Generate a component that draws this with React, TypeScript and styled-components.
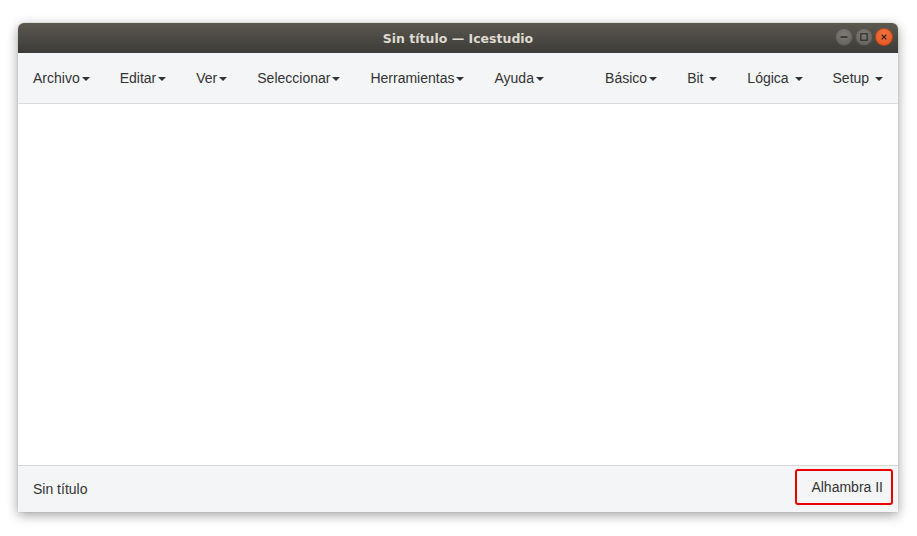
import React from "react";
import styled, { createGlobalStyle } from "styled-components";

const GlobalStyle = createGlobalStyle`
  html, body {
    margin: 0;
    padding: 0;
    background: #ffffff;
  }
`;

const Page = styled.div`
  width: 917px;
  height: 536px;
  padding: 23px 19px 24px 18px;
  box-sizing: border-box;
`;

const Window = styled.div`
  width: 880px;
  height: 489px;
  display: flex;
  flex-direction: column;
  border-radius: 6px 6px 0 0;
  overflow: hidden;
  box-shadow: 0 3px 12px rgba(0, 0, 0, 0.38), 0 0 1px rgba(0, 0, 0, 0.3);
  font-family: "Liberation Sans", Arial, sans-serif;
`;

const TitleBar = styled.div`
  height: 30px;
  flex: none;
  position: relative;
  display: flex;
  align-items: center;
  justify-content: center;
  background: linear-gradient(#5b5850, #3c3b37);
  color: #dfdbd2;
  font-family: "DejaVu Sans", sans-serif;
  font-weight: bold;
  font-size: 12.5px;
`;

const Controls = styled.div`
  position: absolute;
  right: 5px;
  top: 5px;
  display: flex;
  gap: 2px;
`;

const CtrlButton = styled.div<{ $close?: boolean }>`
  width: 18px;
  height: 18px;
  border-radius: 50%;
  display: flex;
  align-items: center;
  justify-content: center;
  background: ${({ $close }) =>
    $close
      ? "radial-gradient(circle at 50% 35%, #f2733f, #e0511b)"
      : "radial-gradient(circle at 50% 35%, #7c7a73, #5f5d57)"};
  box-shadow: inset 0 0 0 1px rgba(0, 0, 0, 0.25);
`;

const NavBar = styled.nav`
  height: 50px;
  flex: none;
  display: flex;
  align-items: center;
  justify-content: space-between;
  background: #f4f5f7;
  border-bottom: 1px solid #dcdcdc;
`;

const NavGroup = styled.div`
  display: flex;
  align-items: center;
`;

const NavItem = styled.div`
  padding: 15px;
  font-size: 14px;
  line-height: 20px;
  color: #333;
  white-space: pre;
`;

const Caret = styled.span`
  display: inline-block;
  width: 0;
  height: 0;
  margin-left: 2px;
  vertical-align: middle;
  border-top: 4px solid #333;
  border-left: 4px solid transparent;
  border-right: 4px solid transparent;
`;

const Canvas = styled.main`
  flex: 1;
  background: #ffffff;
`;

const Footer = styled.footer`
  height: 47px;
  flex: none;
  display: flex;
  align-items: center;
  justify-content: space-between;
  background: #f4f5f7;
  border-top: 1px solid #d6d6d6;
  padding: 0 5px 0 15px;
  box-sizing: border-box;
  font-size: 14px;
  line-height: 20px;
  color: #333;
`;

const BoardBox = styled.div`
  align-self: flex-start;
  margin-top: 3px;
  border: 2px solid #ee0000;
  border-radius: 3px;
  padding: 6px 8px 6px 14px;
`;

const menusLeft = ["Archivo", "Editar", "Ver", "Seleccionar", "Herramientas", "Ayuda"];
const menusRight = ["Básico", "Bit ", "Lógica ", "Setup "];

export default function App() {
  return (
    <>
      <GlobalStyle />
      <Page>
        <Window>
          <TitleBar>
            Sin título — Icestudio
            <Controls>
              <CtrlButton>
                <svg width="10" height="10" viewBox="0 0 10 10">
                  <line x1="1.5" y1="5" x2="8.5" y2="5" stroke="#2f2e2b" strokeWidth="1.4" />
                </svg>
              </CtrlButton>
              <CtrlButton>
                <svg width="10" height="10" viewBox="0 0 10 10">
                  <rect x="1.8" y="1.8" width="6.4" height="6.4" fill="none" stroke="#2f2e2b" strokeWidth="1.2" />
                </svg>
              </CtrlButton>
              <CtrlButton $close>
                <svg width="10" height="10" viewBox="0 0 10 10">
                  <path d="M2.6 2.6 L7.4 7.4 M7.4 2.6 L2.6 7.4" stroke="#3a1a0c" strokeWidth="1.3" />
                </svg>
              </CtrlButton>
            </Controls>
          </TitleBar>
          <NavBar>
            <NavGroup>
              {menusLeft.map((m) => (
                <NavItem key={m}>
                  {m}
                  <Caret />
                </NavItem>
              ))}
            </NavGroup>
            <NavGroup>
              {menusRight.map((m) => (
                <NavItem key={m}>
                  {m}
                  <Caret />
                </NavItem>
              ))}
            </NavGroup>
          </NavBar>
          <Canvas />
          <Footer>
            <span>Sin título</span>
            <BoardBox>Alhambra II</BoardBox>
          </Footer>
        </Window>
      </Page>
    </>
  );
}
